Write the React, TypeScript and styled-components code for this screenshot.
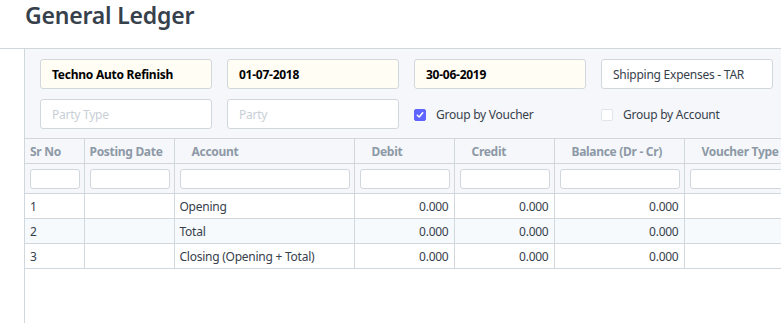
import React from 'react';
import styled, { createGlobalStyle } from 'styled-components';

const GlobalStyle = createGlobalStyle`
	body {
		margin: 0;
		font-family: "Noto Sans", "Open Sans", sans-serif;
		color: #36414c;
		background: #fff;
	}
`;

type Column = { label: string; width: number; indent: number; align?: 'right' };

const columns: Column[] = [
	{ label: 'Sr No', width: 59, indent: 5 },
	{ label: 'Posting Date', width: 90, indent: 5 },
	{ label: 'Account', width: 180, indent: 17 },
	{ label: 'Debit', width: 100, indent: 17, align: 'right' },
	{ label: 'Credit', width: 100, indent: 17, align: 'right' },
	{ label: 'Balance (Dr - Cr)', width: 130, indent: 17, align: 'right' },
	{ label: 'Voucher Type', width: 130, indent: 17 },
];

const rows = [
	['1', '', 'Opening', '0.000', '0.000', '0.000', ''],
	['2', '', 'Total', '0.000', '0.000', '0.000', ''],
	['3', '', 'Closing (Opening + Total)', '0.000', '0.000', '0.000', ''],
];

const App: React.FunctionComponent = () => {
	return (
		<>
			<GlobalStyle />
			<PageHead>
				<Title>General Ledger</Title>
			</PageHead>
			<Layout>
				<Main>
					<Filters>
						<Field $filled $bold>Techno Auto Refinish</Field>
						<Field $filled $bold>01-07-2018</Field>
						<Field $filled $bold>30-06-2019</Field>
						<Field>Shipping Expenses - TAR</Field>
						<Field $placeholder>Party Type</Field>
						<Field $placeholder>Party</Field>
						<Check>
							<Box $checked>
								<svg width="8" height="8" viewBox="0 0 8 8">
									<path d="M1.3 4.2 L3.2 6 L6.7 1.8" fill="none" stroke="#fff" strokeWidth="1.5" strokeLinecap="round" strokeLinejoin="round" />
								</svg>
							</Box>
							Group by Voucher
						</Check>
						<Check>
							<Box />
							Group by Account
						</Check>
					</Filters>
					<Table>
						<colgroup>
							{columns.map((c) => (
								<col key={c.label} style={{ width: c.width }} />
							))}
						</colgroup>
						<thead>
							<tr>
								{columns.map((c) => (
									<HeadCell key={c.label} $indent={c.indent}>{c.label}</HeadCell>
								))}
							</tr>
							<tr>
								{columns.map((c) => (
									<FilterCell key={c.label}>
										<FilterInput />
									</FilterCell>
								))}
							</tr>
						</thead>
						<tbody>
							{rows.map((r, i) => (
								<Row key={i} $striped={i === 1}>
									{r.map((v, j) => (
										<Cell key={j} $right={columns[j].align === 'right'}>{v}</Cell>
									))}
								</Row>
							))}
						</tbody>
					</Table>
				</Main>
			</Layout>
		</>
	);
};

const PageHead = styled.div`
	height: 48px;
	padding-left: 25px;
	box-sizing: border-box;
`;

const Title = styled.h1`
	margin: 0;
	font-size: 23px;
	line-height: 30px;
	font-weight: 600;
	color: #36414c;
	letter-spacing: -0.2px;
`;

const Layout = styled.div`
	display: flex;
	border-top: 1px solid #d1d8dd;
	min-height: 274px;
`;

const Main = styled.div`
	margin-left: 24px;
	border-left: 1px solid #d1d8dd;
	flex: 1;
	overflow: hidden;
`;

const Filters = styled.div`
	display: grid;
	grid-template-columns: repeat(4, 172px);
	grid-auto-rows: 30px;
	column-gap: 15px;
	row-gap: 10px;
	padding: 10px 15px 9px;
	background: #f5f7fa;
	border-bottom: 1px solid #d1d8dd;
	width: 900px;
`;

const Field = styled.div<{ $filled?: boolean; $bold?: boolean; $placeholder?: boolean }>`
	display: flex;
	align-items: center;
	box-sizing: border-box;
	padding: 0 11px;
	border: 1px solid #d1d8dd;
	border-radius: 3px;
	font-size: 12px;
	letter-spacing: -0.25px;
	background: ${(p) => (p.$filled ? '#fffdf4' : '#fff')};
	font-weight: ${(p) => (p.$bold ? 700 : 400)};
	color: ${(p) => (p.$bold ? '#000' : p.$placeholder ? '#c8cfd6' : '#36414c')};
	white-space: nowrap;
`;

const Check = styled.label`
	display: flex;
	align-items: center;
	gap: 10px;
	font-size: 12px;
	letter-spacing: -0.25px;
	color: #36414c;
	padding-top: 1px;
`;

const Box = styled.span<{ $checked?: boolean }>`
	display: inline-flex;
	align-items: center;
	justify-content: center;
	width: 12px;
	height: 12px;
	box-sizing: border-box;
	border-radius: 2px;
	border: 1px solid ${(p) => (p.$checked ? '#5e64ff' : '#e0e5e9')};
	background: ${(p) => (p.$checked ? '#5e64ff' : '#fff')};
`;

const Table = styled.table`
	border-collapse: collapse;
	table-layout: fixed;
	width: 789px;
	font-size: 12px;
	letter-spacing: -0.25px;
`;

const HeadCell = styled.th<{ $indent: number }>`
	height: 24px;
	padding: 0 0 0 ${(p) => p.$indent}px;
	text-align: left;
	font-weight: 700;
	letter-spacing: -0.3px;
	color: #8d99a6;
	background: #f5f7fa;
	border-right: 1px solid #d1d8dd;
	border-bottom: 1px solid #d1d8dd;
	white-space: nowrap;
`;

const FilterCell = styled.td`
	height: 29px;
	padding: 0 4px 0 5px;
	background: #f5f7fa;
	border-right: 1px solid #d1d8dd;
	border-bottom: 1px solid #d1d8dd;
`;

const FilterInput = styled.div`
	height: 20px;
	box-sizing: border-box;
	border: 1px solid #d1d8dd;
	border-radius: 3px;
	background: #fff;
`;

const Row = styled.tr<{ $striped?: boolean }>`
	background: ${(p) => (p.$striped ? '#f7fafc' : '#fff')};
`;

const Cell = styled.td<{ $right?: boolean }>`
	height: 24px;
	padding: 0 5px;
	text-align: ${(p) => (p.$right ? 'right' : 'left')};
	color: #36414c;
	border-right: 1px solid #d1d8dd;
	border-bottom: 1px solid #d1d8dd;
	white-space: nowrap;
`;

export default App;
